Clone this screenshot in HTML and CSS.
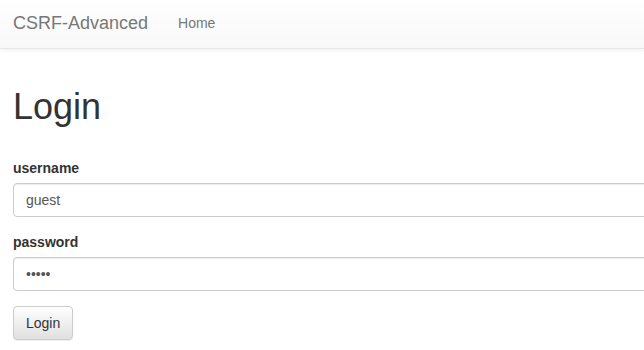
FILE: index.html
```html
<!DOCTYPE html>
<html lang="en">
<head>
  <meta charset="UTF-8">
  <meta name="viewport" content="width=device-width, initial-scale=1.0">
  <title>CSRF-Advanced</title>
  <link rel="stylesheet" href="styles.css">
</head>
<body>
  <div class="page">
    <nav class="navbar">
      <a class="brand" href="#">CSRF-Advanced</a>
      <a class="nav-link" href="#">Home</a>
    </nav>

    <div class="container">
      <h1>Login</h1>
      <form>
        <div class="form-group">
          <label for="username">username</label>
          <input type="text" id="username" class="form-control" value="guest">
        </div>
        <div class="form-group">
          <label for="password">password</label>
          <input type="password" id="password" class="form-control" value="guest">
        </div>
        <button type="button" class="btn">Login</button>
      </form>
    </div>
  </div>
</body>
</html>
```

FILE: styles.css
```css
body { margin: 0; font-family: "Liberation Sans", Arial, sans-serif; font-size: 14px; line-height: 20px; color: #333; background: #fff; }
.page { overflow: hidden; height: 350px; }
.navbar { display: flex; align-items: center; box-sizing: border-box; height: 49px; padding: 0 0 3px 13px; background: linear-gradient(to bottom, #fff 0, #f8f8f8 100%); border-bottom: 1px solid #e7e7e7; box-shadow: inset 0 1px 0 rgba(255,255,255,.15), 0 1px 5px rgba(0,0,0,.075); }
.brand { font-size: 18px; color: #777; text-decoration: none; margin-right: 30px; }
.nav-link { color: #777; text-decoration: none; }
.container { padding-left: 13px; }
.container form { width: 760px; }
h1 { font-size: 36px; font-weight: 500; line-height: 1.1; margin: 38px 0 31px; }
label { display: block; font-weight: bold; margin-bottom: 5px; }
.form-group { margin-bottom: 15px; }
.form-control { display: block; box-sizing: border-box; width: 100%; height: 34px; padding: 6px 12px; font-family: inherit; font-size: 14px; color: #555; background: #fff; border: 1px solid #ccc; border-radius: 4px; box-shadow: inset 0 1px 1px rgba(0,0,0,.075); }
.btn { height: 34px; padding: 6px 12px; font-family: inherit; font-size: 14px; color: #333; background: linear-gradient(to bottom, #fff 0, #e0e0e0 100%); border: 1px solid #ccc; border-radius: 4px; box-shadow: inset 0 1px 0 rgba(255,255,255,.15), 0 1px 1px rgba(0,0,0,.075); }
```
